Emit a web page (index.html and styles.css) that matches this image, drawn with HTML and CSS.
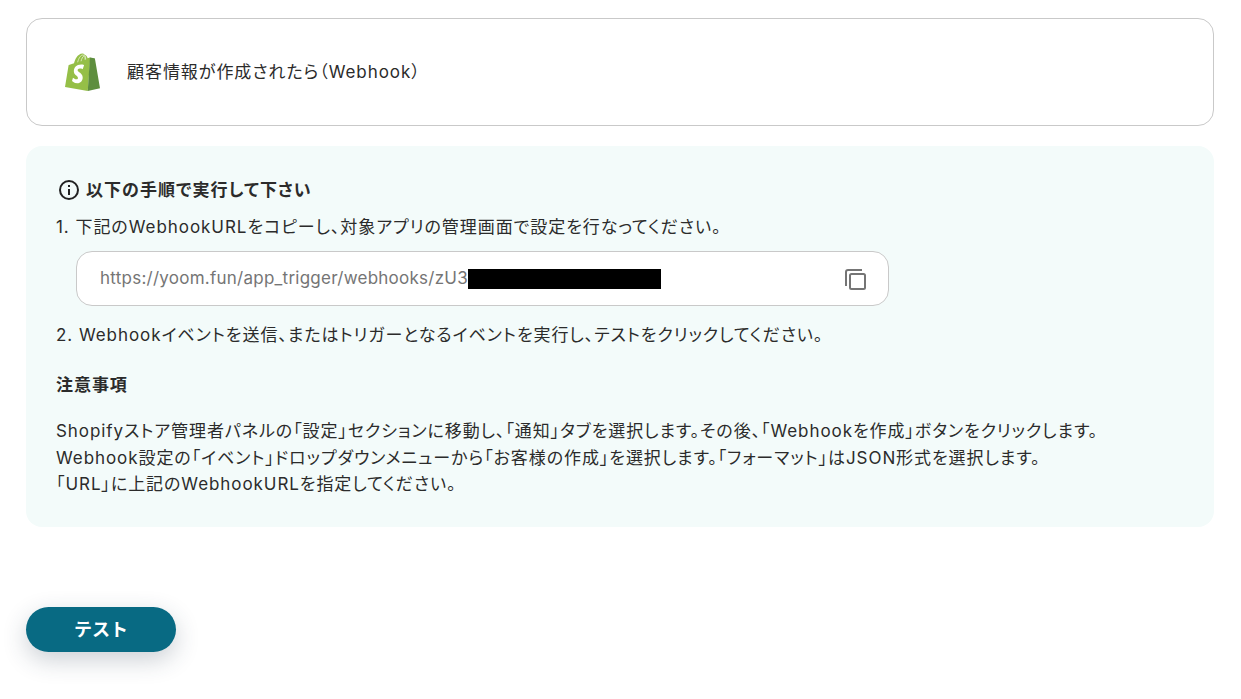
FILE: index.html
```html
<!DOCTYPE html>
<html lang="ja">
<head>
<meta charset="utf-8">
<title>Webhook</title>
<link rel="stylesheet" href="styles.css">
</head>
<body>
<main class="page">
  <section class="app-card">
    <svg class="app-logo" viewBox="0 0 36 41" width="35" height="40" aria-hidden="true">
      <path fill="#95bf47" d="M25.6 6.600 23.300 7.300c-.5-1.600-1.500-3.300-3.100-3.600C19.600 2.900 18.800 2.500 18 2.500 12.800 2.600 10 9.400 9.300 12.600L4.700 14c-.9.300-1 .3-1.100 1.200L0 37l23.400 4L26 6.700z"/>
      <path fill="#5e8e3e" d="M26 6.600c-.2 0-.3 0-.4 0L23.400 41 36 38.200 30.800 7.900c-.1-.4-.4-.5-.6-.5z"/>
      <path fill="none" stroke="#dfeac4" stroke-width=".9" d="M13 11.500c1-4 3-7.500 5.500-7.500 2 0 2.200 2.500 2.200 5M16.500 10.500c.6-2.500 1.500-4.500 3-5.500M21.300 8.500c0-1.500-.2-3-1-4"/>
      <path fill="#fff" d="M19.600 14.500l-1.400 4.200s-1.300-.7-2.800-.7c-2.300 0-2.400 1.400-2.400 1.800 0 2 5.200 2.700 5.200 7.300 0 3.600-2.300 5.900-5.400 5.900-3.700 0-5.600-2.300-5.600-2.300l1-3.300s2 1.700 3.600 1.700c1.100 0 1.500-.9 1.500-1.500 0-2.600-4.200-2.700-4.200-6.900 0-3.500 2.500-6.900 7.600-6.900 2 0 2.900.7 2.900.7z"/>
    </svg>
    <span class="app-title">顧客情報が作成されたら（Webhook）</span>
  </section>

  <section class="guide">
    <h2 class="guide-heading">
      <svg class="info-icon" viewBox="0 0 24 24" width="24" height="24" aria-hidden="true">
        <circle cx="12" cy="12" r="9" fill="none" stroke="#222" stroke-width="2"/>
        <rect x="11" y="11" width="2" height="6" fill="#222"/>
        <rect x="11" y="7" width="2" height="2" fill="#222"/>
      </svg>
      以下の手順で実行して下さい
    </h2>
    <p class="step">1. 下記のWebhookURLをコピーし、対象アプリの管理画面で設定を行なってください。</p>
    <div class="url-field">
      <span class="url-text">https://yoom.fun/app_trigger/webhooks/zU3</span><span class="redact"></span>
      <svg class="copy-icon" viewBox="0 0 21 21" width="21" height="21" aria-hidden="true">
        <path fill="none" stroke="#757575" stroke-width="2" d="M1 17V3a2 2 0 0 1 2-2h14"/>
        <rect x="5" y="5" width="15" height="15" rx="1.500" fill="none" stroke="#757575" stroke-width="2"/>
      </svg>
    </div>
    <p class="step step-two">2. Webhookイベントを送信、またはトリガーとなるイベントを実行し、テストをクリックしてください。</p>
    <h3 class="notes-heading">注意事項</h3>
    <p class="notes">Shopifyストア管理者パネルの「設定」セクションに移動し、「通知」タブを選択します。その後、「Webhookを作成」ボタンをクリックします。<br>Webhook設定の「イベント」ドロップダウンメニューから「お客様の作成」を選択します。「フォーマット」はJSON形式を選択します。<br>「URL」に上記のWebhookURLを指定してください。</p>
  </section>

  <button class="test-button" type="button"><span class="test-label">テスト</span></button>
</main>
</body>
</html>
```
FILE: styles.css
```css
* { box-sizing: border-box; }
html, body { margin: 0; padding: 0; background: #fff; }
body {
  width: 1241px;
  height: 699px;
  overflow: hidden;
  font-family: Inter, "Noto Sans CJK JP", sans-serif;
  font-size: 16px;
  color: #2b2b2b;
  font-feature-settings: "palt";
}
.page { padding: 18px 27px 0 26px; display: flex; flex-direction: column; }
.app-card {
  height: 108px;
  border: 1px solid #c9c9c9;
  border-radius: 16px;
  display: flex;
  align-items: center;
  padding-left: 38px;
  gap: 27px;
}
.app-logo { flex: none; margin-top: -3px; }
.app-title { font-size: 17px; letter-spacing: .95px; margin-top: -3px; }
.guide {
  margin-top: 20px;
  height: 381px;
  background: #f3fbfa;
  border-radius: 16px;
  padding: 31px 30px 0 30px;
}
.guide-heading {
  margin: 0;
  display: flex;
  align-items: center;
  gap: 5px;
  font-size: 17px;
  font-weight: 700;
  letter-spacing: 1.05px;
  line-height: 26px;
  padding-left: 1px;
}
.step { margin: 11px 0 0; line-height: 26px; font-size: 17px; letter-spacing: .95px; }
.url-field {
  margin: 11px 0 0 20px;
  width: 813px;
  height: 55px;
  background: #fff;
  border: 1px solid #c9c9c9;
  border-radius: 16px;
  display: flex;
  align-items: center;
  padding: 0 22px 0 23px;
  color: #757575;
}
.url-text { font-size: 17px; letter-spacing: .25px; margin-top: -2px; }
.redact { width: 193px; height: 20px; background: #000; }
.copy-icon { margin-left: auto; margin-top: 1px; }
.step-two { margin-top: 16px; }
.notes-heading {
  margin: 24px 0 0;
  font-size: 17px;
  font-weight: 700;
  line-height: 26px;
  letter-spacing: .95px;
}
.notes { margin: 20px 0 0; line-height: 26.5px; font-size: 17px; letter-spacing: .93px; }
.test-button {
  margin-top: 80px;
  width: 150px;
  height: 45px;
  border: 0;
  border-radius: 23px;
  background: #086a83;
  color: #fff;
  font: 700 18px Inter, "Noto Sans CJK JP", sans-serif;
  padding: 0 0 3px;
  box-shadow: 0 8px 24px rgba(40, 60, 80, .24);
}
```
